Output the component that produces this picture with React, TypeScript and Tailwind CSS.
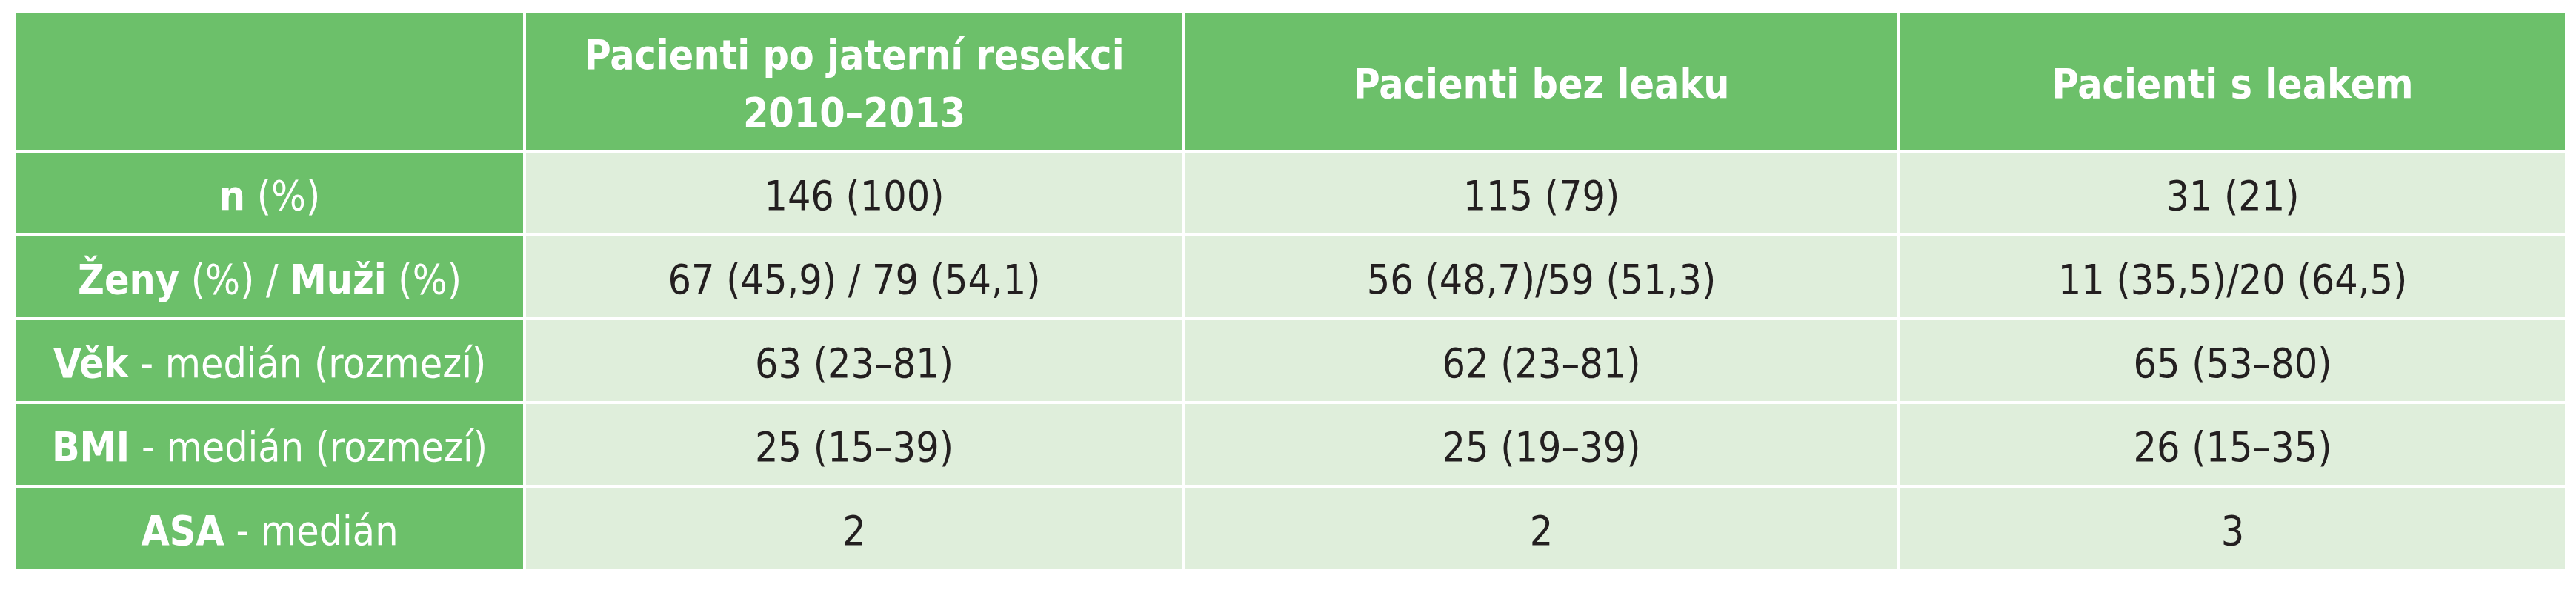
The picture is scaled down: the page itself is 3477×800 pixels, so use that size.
import * as React from "react";

interface Row {
  label: React.ReactNode;
  all: string;
  noLeak: string;
  leak: string;
}

const rows: Row[] = [
  {
    label: (
      <>
        <b className="font-bold">n</b> (%)
      </>
    ),
    all: "146 (100)",
    noLeak: "115 (79)",
    leak: "31 (21)",
  },
  {
    label: (
      <>
        <b className="font-bold">Ženy</b> (%) / <b className="font-bold">Muži</b> (%)
      </>
    ),
    all: "67 (45,9) / 79 (54,1)",
    noLeak: "56 (48,7)/59 (51,3)",
    leak: "11 (35,5)/20 (64,5)",
  },
  {
    label: (
      <>
        <b className="font-bold">Věk</b> - medián (rozmezí)
      </>
    ),
    all: "63 (23–81)",
    noLeak: "62 (23–81)",
    leak: "65 (53–80)",
  },
  {
    label: (
      <>
        <b className="font-bold">BMI</b> - medián (rozmezí)
      </>
    ),
    all: "25 (15–39)",
    noLeak: "25 (19–39)",
    leak: "26 (15–35)",
  },
  {
    label: (
      <>
        <b className="font-bold">ASA</b> - medián
      </>
    ),
    all: "2",
    noLeak: "2",
    leak: "3",
  },
];

function HeadCell({ children }: { children?: React.ReactNode }) {
  return (
    <div className="flex items-center justify-center bg-[#6cc06a] pt-[6px] text-center font-bold leading-[1.42] text-white">
      {children}
    </div>
  );
}

function LabelCell({ children }: { children: React.ReactNode }) {
  return (
    <div className="flex items-center justify-center bg-[#6cc06a] pt-[8px] text-center text-white">
      <span>{children}</span>
    </div>
  );
}

function DataCell({ children }: { children: React.ReactNode }) {
  return (
    <div className="flex items-center justify-center bg-[#dfeedb] pt-[8px] text-center text-[#231f20]">
      {children}
    </div>
  );
}

export default function App() {
  return (
    <div className="h-[800px] w-[3477px] bg-white pl-[22px] pt-[18px] font-['Liberation_Sans_Narrow','DejaVu_Sans_Condensed','Open_Sans',sans-serif] text-[55px]">
      <div className="grid w-[3440px] grid-cols-[684px_886px_961px_897px] grid-rows-[184px_repeat(5,109px)] gap-[4px]">
        {/* hlavička */}
        <HeadCell />
        <HeadCell>
          Pacienti po jaterní resekci
          <br />
          2010–2013
        </HeadCell>
        <HeadCell>Pacienti bez leaku</HeadCell>
        <HeadCell>Pacienti s leakem</HeadCell>

        {rows.map((row, i) => (
          <React.Fragment key={i}>
            <LabelCell>{row.label}</LabelCell>
            <DataCell>{row.all}</DataCell>
            <DataCell>{row.noLeak}</DataCell>
            <DataCell>{row.leak}</DataCell>
          </React.Fragment>
        ))}
      </div>
    </div>
  );
}
